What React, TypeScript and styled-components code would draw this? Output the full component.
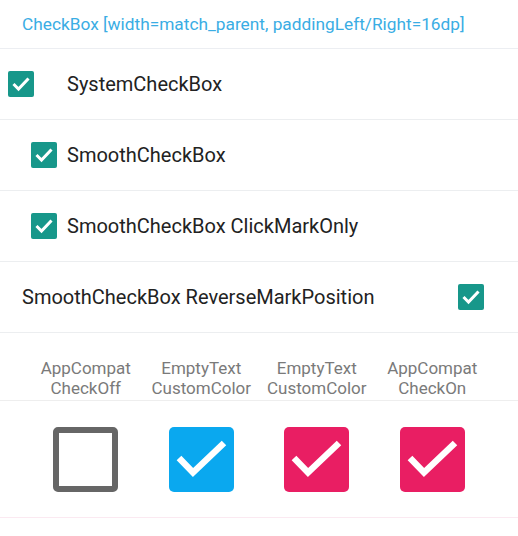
import React from "react";
import styled, { createGlobalStyle } from "styled-components";

const Global = createGlobalStyle`
  html, body { margin: 0; padding: 0; background: #ffffff; }
  body { font-family: Roboto, "Noto Sans", "Liberation Sans", sans-serif; }
`;

const Page = styled.div`
  width: 518px;
  display: flex;
  flex-direction: column;
  background: #fff;
`;

const Header = styled.div`
  height: 48px;
  display: flex;
  align-items: center;
  padding-left: 22px;
  font-size: 17.3px;
  color: #3aade4;
  border-bottom: 1px solid #eceef2;
  white-space: nowrap;
`;

const Row = styled.div<{ $pl: number; $pr?: number; $gap: number; $between?: boolean }>`
  height: 70px;
  display: flex;
  align-items: center;
  padding-left: ${(p) => p.$pl}px;
  padding-right: ${(p) => p.$pr ?? 0}px;
  gap: ${(p) => p.$gap}px;
  justify-content: ${(p) => (p.$between ? "space-between" : "flex-start")};
  border-bottom: 1px solid #eceef0;
`;

const Label = styled.span`
  font-size: 20px;
  color: #222;
  white-space: nowrap;
`;

const SmallBox = styled.span`
  width: 26px;
  height: 26px;
  border-radius: 2px;
  background: #17978a;
  display: inline-flex;
  align-items: center;
  justify-content: center;
  flex: none;
`;

const Grid = styled.div`
  display: grid;
  grid-template-columns: repeat(4, 1fr);
  padding: 0 28px;
`;

const LabelRow = styled(Grid)`
  height: 67px;
  align-items: end;
  border-bottom: 1px solid #eeeeee;
`;

const Caption = styled.div`
  text-align: center;
  font-size: 17px;
  line-height: 20px;
  color: #7a7a7a;
  padding-bottom: 2px;
  white-space: nowrap;
`;

const BoxRow = styled(Grid)`
  height: 116px;
  align-items: center;
  justify-items: center;
  border-bottom: 1px solid #fbe9f1;
`;

const BigBox = styled.span<{ $color?: string }>`
  width: 65px;
  height: 65px;
  box-sizing: border-box;
  border-radius: 5px;
  display: inline-flex;
  align-items: center;
  justify-content: center;
  background: ${(p) => p.$color ?? "transparent"};
  border: ${(p) => (p.$color ? "none" : "6px solid #666666")};
`;

const SmallCheck = () => (
  <SmallBox>
    <svg width="26" height="26" viewBox="0 0 26 26">
      <path d="M5.5 13 L10.5 18 L20.5 7.5" fill="none" stroke="#fff" strokeWidth="3" />
    </svg>
  </SmallBox>
);

const BigCheck = ({ color }: { color: string }) => (
  <BigBox $color={color}>
    <svg width="65" height="65" viewBox="0 0 65 65">
      <path d="M10 31 L24 45.5 L55 16" fill="none" stroke="#fff" strokeWidth="6.5" />
    </svg>
  </BigBox>
);

export default function App() {
  return (
    <Page>
      <Global />
      <Header>CheckBox [width=match_parent, paddingLeft/Right=16dp]</Header>
      <Row $pl={8} $gap={33}>
        <SmallCheck />
        <Label>SystemCheckBox</Label>
      </Row>
      <Row $pl={31} $gap={10}>
        <SmallCheck />
        <Label>SmoothCheckBox</Label>
      </Row>
      <Row $pl={31} $gap={10}>
        <SmallCheck />
        <Label>SmoothCheckBox ClickMarkOnly</Label>
      </Row>
      <Row $pl={22} $pr={34} $gap={0} $between>
        <Label>SmoothCheckBox ReverseMarkPosition</Label>
        <SmallCheck />
      </Row>
      <LabelRow>
        <Caption>AppCompat<br />CheckOff</Caption>
        <Caption>EmptyText<br />CustomColor</Caption>
        <Caption>EmptyText<br />CustomColor</Caption>
        <Caption>AppCompat<br />CheckOn</Caption>
      </LabelRow>
      <BoxRow>
        <BigBox />
        <BigCheck color="#0aa8ef" />
        <BigCheck color="#e91e63" />
        <BigCheck color="#e91e63" />
      </BoxRow>
    </Page>
  );
}
